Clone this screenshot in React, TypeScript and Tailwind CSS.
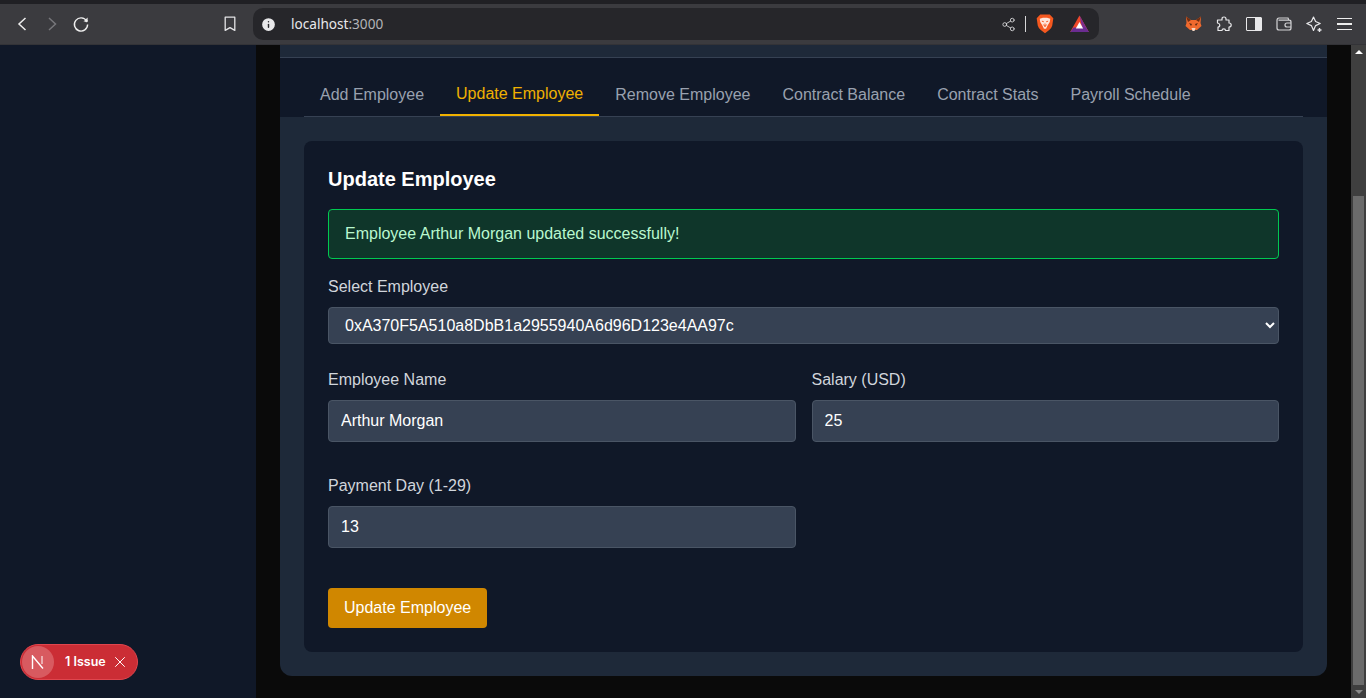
import { Info, Share2, X } from "lucide-react";

const tabs = [
  "Add Employee",
  "Update Employee",
  "Remove Employee",
  "Contract Balance",
  "Contract Stats",
  "Payroll Schedule",
];

function BrowserBar() {
  return (
    <div className="h-[45px] shrink-0 bg-[#3b3b3f] border-t-4 border-[#202024] border-b border-b-[#333337] flex items-center text-[#e8e8ea]">
      <div className="w-[253px] shrink-0 flex items-center h-full">
        <svg className="ml-[16px]" width="12" height="16" viewBox="0 0 12 16" fill="none" stroke="#eeeeee" strokeWidth="1.5">
          <path d="M9.5 2 L3 8 L9.5 14" />
        </svg>
        <svg className="ml-[18px]" width="12" height="16" viewBox="0 0 12 16" fill="none" stroke="#77777b" strokeWidth="1.5">
          <path d="M3 2 L9.5 8 L3 14" />
        </svg>
        <svg className="ml-[14px]" width="18" height="18" viewBox="0 0 18 18" fill="none" stroke="#eeeeee" strokeWidth="1.4">
          <path d="M14.6 6 A6.6 6.6 0 1 0 15.6 9.5" />
          <path d="M11.5 6.4 L15.6 6.4 L15.6 2.5" fill="#eeeeee" stroke="none" />
          <circle cx="14.4" cy="6" r="1.3" fill="#eeeeee" stroke="none" />
        </svg>
        <svg className="ml-auto mr-[16px]" width="14" height="16" viewBox="0 0 14 16" fill="none" stroke="#e4e4e6" strokeWidth="1.3">
          <path d="M2.2 1.2 H11.8 V14.4 L7 11.6 L2.2 14.4 Z" strokeLinejoin="round" />
        </svg>
      </div>
      <div className="w-[846px] shrink-0 h-[32px] rounded-[10px] bg-[#26262a] flex items-center pl-[7px] pr-[10px]">
        <Info size={17} fill="#e8e8ea" stroke="#26262a" strokeWidth={2} />
        <span className="ml-[14px] text-[13.6px] font-['Noto_Sans',sans-serif]">
          localhost<span className="text-[#b4b4b8]">:3000</span>
        </span>
        <Share2 className="ml-auto" size={15} stroke="#d6d6d8" strokeWidth={1.4} />
        <div className="w-px h-[16px] bg-[#d6d6d8] ml-[9px]"></div>
        <svg className="ml-[10px]" width="18" height="20" viewBox="0 0 17 19">
          <path d="M4 0.5 H13 L16.4 4 L15.4 11 Q14.8 13.5 12.5 15.2 L8.5 18.2 L4.5 15.2 Q2.2 13.5 1.6 11 L0.6 4 Z" fill="#f4581f" />
          <path d="M3.5 4.5 L6.5 3.5 H10.5 L13.5 4.5 L13 7.5 L11 11 L9.5 14 H7.5 L6 11 L4 7.5 Z" fill="#ffe6da" />
          <path d="M5.5 6.8 L7.4 7.4 M11.5 6.8 L9.6 7.4 M8.5 9 V12 M7 10 L8.5 12 L10 10" stroke="#f4581f" strokeWidth="0.9" fill="none" />
        </svg>
        <svg className="ml-[16px]" width="19" height="18" viewBox="0 0 19 18">
          <path d="M9.5 0.5 L18.8 17 H0.2 Z" fill="#f0482a" />
          <path d="M9.5 0.5 L18.8 17 H13 Z" fill="#7c2d8f" />
          <path d="M0.2 17 L3.5 12.5 H15.5 L18.8 17 Z" fill="#6a2c91" />
          <path d="M9.5 7 L13.2 13.5 H5.8 Z" fill="#ffffff" />
        </svg>
      </div>
      <div className="flex-1 flex items-center h-full pl-[86px] gap-[14px]">
        <svg width="17" height="16" viewBox="0 0 17 16">
          <path d="M1 0.5 L6 4 H11 L16 0.5 L15.5 7 L16.5 10 L12 14 H5 L0.5 10 L1.5 7 Z" fill="#f0692d" />
          <path d="M1 0.5 L6 4 L3 6 Z M16 0.5 L11 4 L14 6 Z" fill="#6f2e12" />
          <path d="M4 7 L7 8 L6 10 Z M13 7 L10 8 L11 10 Z" fill="#5a2a12" />
          <path d="M6.5 12 H10.5 L9.5 15 H7.5 Z" fill="#f4d7c2" />
        </svg>
        <svg width="16" height="16" viewBox="0 0 16 16" fill="none" stroke="#e8e8ea" strokeWidth="1.2" strokeLinejoin="round">
          <path d="M6 3 Q6 1 8 1 Q10 1 10 3 L10 4 H13 V7 Q15.2 7 15.2 9 Q15.2 11 13 11 V14.5 H9.5 Q9.5 12.8 7.8 12.8 Q6 12.8 6 14.5 H2 V11 Q3.8 11 3.8 9 Q3.8 7.4 1.5 7 V4 H6 Z" />
        </svg>
        <div className="w-[16px] h-[14px] border border-[#e8e8ea] rounded-[1px] flex justify-end">
          <div className="w-[6px] h-full bg-[#e8e8ea]"></div>
        </div>
        <svg width="16" height="14" viewBox="0 0 16 14" fill="none" stroke="#d4d4d6" strokeWidth="1.2">
          <path d="M1 3.5 Q1 1 3 1 H12 L13 3.2 M1 3.5 V11 Q1 13 3 13 H13 Q15 13 15 11 V5 Q15 3.2 13 3.2 H2.5" />
          <path d="M15 6 H11 Q9 6 9 8 Q9 10 11 10 H15" />
        </svg>
        <svg width="17" height="17" viewBox="0 0 17 17" fill="none" stroke="#e8e8ea" strokeWidth="1.2" strokeLinejoin="round">
          <path d="M7.5 1 L9.6 5.5 L14.2 7.5 L9.6 9.6 L7.5 14.5 L5.4 9.6 L0.8 7.5 L5.4 5.5 Z" />
          <path d="M13.5 12 V16 M11.5 14 H15.5" strokeWidth="1.4" />
        </svg>
        <div className="w-[15px] flex flex-col gap-[4px]">
          <div className="h-[1.5px] bg-[#eeeeee]"></div>
          <div className="h-[1.5px] bg-[#eeeeee]"></div>
          <div className="h-[1.5px] bg-[#eeeeee]"></div>
        </div>
      </div>
    </div>
  );
}

function Field({ label, value }: { label: string; value: string }) {
  return (
    <div className="mb-4">
      <label className="block text-gray-300 mb-2">{label}</label>
      <input
        readOnly
        defaultValue={value}
        className="w-full h-[42px] px-3 rounded bg-gray-700 border border-gray-600 text-white outline-none"
      />
    </div>
  );
}

function Scrollbar() {
  return (
    <div className="w-[15px] shrink-0 bg-[#3f3f3f] flex flex-col items-center">
      <div className="h-[13px] flex items-center">
        <div className="border-x-[4px] border-x-transparent border-b-[4px] border-b-white"></div>
      </div>
      <div className="w-[11px] h-[489px] mt-[138px] bg-[#6b6b6b]"></div>
      <div className="h-[13px] flex items-center">
        <div className="border-x-[4px] border-x-transparent border-t-[4px] border-t-[#8a8a8a]"></div>
      </div>
    </div>
  );
}

export default function App() {
  return (
    <div className="h-[698px] w-[1366px] overflow-hidden flex flex-col bg-[#0a0a0a] font-['Liberation_Sans',Arial,sans-serif]">
      <BrowserBar />
      <div className="flex-1 flex min-h-0">
        <div className="w-[256px] shrink-0 bg-gray-900"></div>
        <div className="flex-1 px-6">
          <div className="rounded-b-xl overflow-hidden">
            <div className="h-[13px] bg-gray-800 border-b border-gray-700"></div>
            <div className="bg-gray-900 px-6">
              <div className="flex items-end border-b border-gray-700 h-[59px]">
                {tabs.map((tab) =>
                  tab === "Update Employee" ? (
                    <div key={tab} className="px-4 pb-2 border-b-2 border-yellow-500 text-yellow-500">
                      {tab}
                    </div>
                  ) : (
                    <div key={tab} className="px-4 pb-[9px] text-gray-400">
                      {tab}
                    </div>
                  )
                )}
              </div>
            </div>
            <div className="bg-gray-800 p-6">
              <div className="bg-gray-900 rounded-lg p-6 h-[511px]">
                <h2 className="text-xl font-semibold text-white mb-4">Update Employee</h2>
                <div className="h-[50px] px-4 flex items-center rounded bg-green-900/50 border border-green-500 text-green-200 mb-4">
                  Employee Arthur Morgan updated successfully!
                </div>
                <label className="block text-gray-300 mb-2">Select Employee</label>
                <select className="w-full h-[37px] px-3 rounded bg-gray-700 border border-gray-600 text-white outline-none [color-scheme:dark]">
                  <option>0xA370F5A510a8DbB1a2955940A6d96D123e4AA97c</option>
                </select>
                <div className="grid grid-cols-2 gap-x-4 mt-6">
                  <Field label="Employee Name" value="Arthur Morgan" />
                  <Field label="Salary (USD)" value="25" />
                  <div className="mt-4">
                    <Field label="Payment Day (1-29)" value="13" />
                  </div>
                </div>
                <button className="h-10 px-4 mt-6 rounded bg-yellow-600 text-white">Update Employee</button>
              </div>
            </div>
          </div>
        </div>
        <Scrollbar />
      </div>
      <div className="fixed left-[20px] top-[644px] w-[118px] h-[36px] rounded-full bg-[#cb2d35] border border-[#e0464e] flex items-center pl-[1px] text-white">
        <div className="w-[32px] h-[32px] rounded-full bg-[#d85a60] flex items-center justify-center">
          <svg width="14" height="14" viewBox="0 0 14 14" fill="none" stroke="#ffffff" strokeWidth="1.4">
            <path d="M1.5 14 V1 L12 13.5" />
            <path d="M11 1 V9" strokeWidth="1" />
          </svg>
        </div>
        <span className="ml-[11px] text-[12.5px] font-semibold font-['Inter',sans-serif]">1 Issue</span>
        <X className="ml-[5px]" size={18} strokeWidth={1.3} />
      </div>
    </div>
  );
}
